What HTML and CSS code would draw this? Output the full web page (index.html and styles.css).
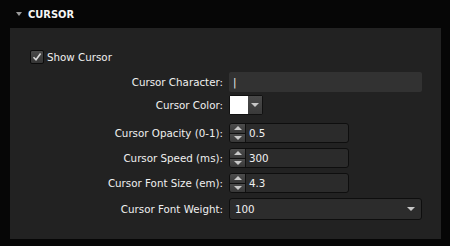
FILE: index.html
```html
<!DOCTYPE html>
<html lang="en">
<head>
    <meta charset="UTF-8">
    <title>Cursor Settings</title>
    <link rel="stylesheet" href="styles.css">
</head>
<body>

<div class="section-head">
    <span class="twisty"></span>
    <span class="section-title">CURSOR</span>
</div>

<div class="panel">
    <label class="check-row">
        <span class="checkbox">
            <svg width="10" height="10" viewBox="0 0 10 10"><path d="M1.5 5.2 L4 7.8 L8.6 1.5" fill="none" stroke="#d8d8d8" stroke-width="1.6"/></svg>
        </span>
        Show Cursor
    </label>

    <div class="form-row">
        <div class="label">Cursor Character:</div>
        <div class="text-input wide">|</div>
    </div>

    <div class="form-row color-row">
        <div class="label">Cursor Color:</div>
        <div class="color-pick">
            <span class="swatch"></span>
            <span class="pick-btn"><span class="arrow-down"></span></span>
        </div>
    </div>

    <div class="form-row spaced">
        <div class="label">Cursor Opacity (0-1):</div>
        <div class="number-input">
            <span class="spinner"><span class="spin-up"></span><span class="spin-down"></span></span>
            <span class="value">0.5</span>
        </div>
    </div>

    <div class="form-row">
        <div class="label">Cursor Speed (ms):</div>
        <div class="number-input">
            <span class="spinner"><span class="spin-up"></span><span class="spin-down"></span></span>
            <span class="value">300</span>
        </div>
    </div>

    <div class="form-row">
        <div class="label">Cursor Font Size (em):</div>
        <div class="number-input">
            <span class="spinner"><span class="spin-up"></span><span class="spin-down"></span></span>
            <span class="value">4.3</span>
        </div>
    </div>

    <div class="form-row select-row">
        <div class="label">Cursor Font Weight:</div>
        <div class="select wide">
            <span>100</span>
            <span class="arrow-down"></span>
        </div>
    </div>
</div>

</body>
</html>
```

FILE: styles.css
```css
body {
    margin: 0;
    width: 450px;
    height: 246px;
    background-color: #060606;
    font-family: 'DejaVu Sans', sans-serif;
    font-size: 10.3px;
    color: #f0f0f0;
    overflow: hidden;
}
.section-head {
    height: 28px;
    display: flex;
    align-items: center;
    padding-left: 16px;
}
.twisty {
    width: 0;
    height: 0;
    border-left: 3px solid transparent;
    border-right: 3px solid transparent;
    border-top: 4px solid #9a9a9a;
    margin-right: 6px;
}
.section-title {
    font-family: 'DejaVu Sans Condensed', 'DejaVu Sans', sans-serif;
    font-weight: bold;
    font-size: 11px;
    color: #f6f6f6;
}
.panel {
    margin-left: 10px;
    width: 431px;
    height: 211px;
    background-color: #222222;
    padding-top: 22px;
    box-sizing: border-box;
}
.check-row {
    display: flex;
    align-items: center;
    height: 14px;
    padding-left: 20px;
    margin-bottom: 8px;
}
.checkbox {
    width: 12px;
    height: 12px;
    border: 1px solid #0c0c0c;
    border-radius: 2px;
    background: linear-gradient(#4a4a4a, #353535);
    display: flex;
    align-items: center;
    justify-content: center;
    margin-right: 3px;
}
.form-row {
    display: grid;
    grid-template-columns: 213px auto;
    column-gap: 6px;
    align-items: center;
    height: 20px;
    margin-bottom: 5px;
}
.form-row .label {
    text-align: right;
}
.color-row {
    margin-top: -2px;
    margin-bottom: 8px;
}
.select-row {
    height: 22px;
}
.text-input {
    height: 20px;
    line-height: 20px;
    background-color: #323232;
    border-radius: 2px;
    padding-left: 4px;
    box-sizing: border-box;
}
.wide {
    width: 193px;
}
.color-pick {
    display: flex;
    width: 34px;
    height: 20px;
    border: 1px solid #111;
    box-sizing: border-box;
    border-radius: 2px;
    background-color: #3c3c3c;
}
.swatch {
    width: 18px;
    background-color: #ffffff;
}
.pick-btn {
    flex: 1;
    display: flex;
    align-items: center;
    justify-content: center;
    background: linear-gradient(#4a4a4a, #3a3a3a);
}
.arrow-down {
    width: 0;
    height: 0;
    border-left: 4px solid transparent;
    border-right: 4px solid transparent;
    border-top: 4px solid #c8c8c8;
}
.number-input {
    display: flex;
    width: 120px;
    height: 20px;
    border: 1px solid #0e0e0e;
    border-radius: 3px;
    box-sizing: border-box;
    background-color: #2b2b2b;
    overflow: hidden;
}
.spinner {
    width: 15px;
    display: flex;
    flex-direction: column;
    border-right: 1px solid #111;
}
.spin-up, .spin-down {
    flex: 1;
    display: flex;
    align-items: center;
    justify-content: center;
    background: linear-gradient(#4c4c4c, #383838);
}
.spin-up {
    border-bottom: 1px solid #111;
}
.spin-up::after {
    content: '';
    border-left: 4px solid transparent;
    border-right: 4px solid transparent;
    border-bottom: 4px solid #c8c8c8;
}
.spin-down::after {
    content: '';
    border-left: 4px solid transparent;
    border-right: 4px solid transparent;
    border-top: 4px solid #c8c8c8;
}
.value {
    padding-left: 3px;
    line-height: 18px;
}
.select {
    display: flex;
    align-items: center;
    justify-content: space-between;
    height: 22px;
    border: 1px solid #0e0e0e;
    border-radius: 3px;
    box-sizing: border-box;
    background-color: #2c2c2c;
    padding: 0 6px 0 5px;
}
```
